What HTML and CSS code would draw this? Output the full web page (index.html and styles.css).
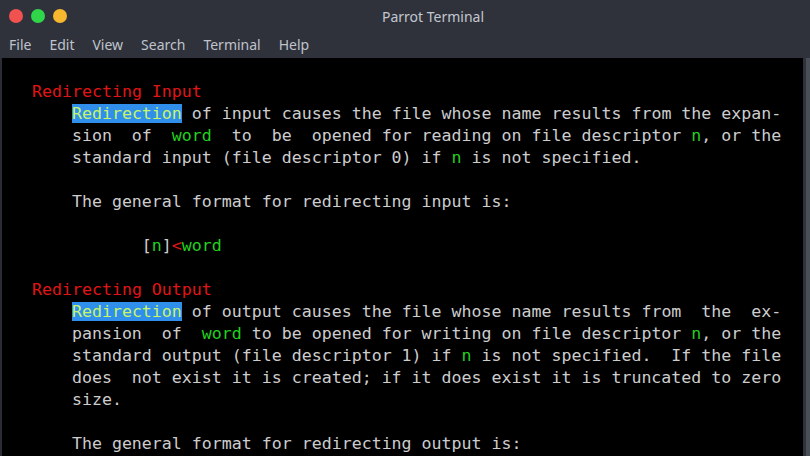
FILE: index.html
```html
<!DOCTYPE html>
<html lang="en">
<head>
  <meta charset="UTF-8" />
  <meta name="viewport" content="width=device-width, initial-scale=1.0" />
  <title>Parrot Terminal</title>
  <link rel="stylesheet" href="styles.css">
</head>
<body>
  <div class="window">

    <div class="titlebar">
      <div class="lights">
        <span class="light red"></span>
        <span class="light green"></span>
        <span class="light yellow"></span>
      </div>
      <div class="title">Parrot Terminal</div>
    </div>

    <div class="menubar">
      <span class="menu-item">File</span>
      <span class="menu-item">Edit</span>
      <span class="menu-item">View</span>
      <span class="menu-item">Search</span>
      <span class="menu-item">Terminal</span>
      <span class="menu-item">Help</span>
    </div>

    <div class="terminal">
      <div class="screen">
        <div class="line"> </div>
        <div class="line">   <span class="red">Redirecting Input</span></div>
        <div class="line">       <span class="hl">Redirection</span><span> of input causes the file whose name results from the expan-</span></div>
        <div class="line"><span>       sion  of  </span><span class="green">word</span><span>  to  be  opened for reading on file descriptor </span><span class="green">n</span><span>, or the</span></div>
        <div class="line"><span>       standard input (file descriptor 0) if </span><span class="green">n</span><span> is not specified.</span></div>
        <div class="line"> </div>
        <div class="line">       The general format for redirecting input is:</div>
        <div class="line"> </div>
        <div class="line"><span>              [</span><span class="green">n</span><span>]</span><span class="red">&lt;</span><span class="green">word</span></div>
        <div class="line"> </div>
        <div class="line">   <span class="red">Redirecting Output</span></div>
        <div class="line">       <span class="hl">Redirection</span><span> of output causes the file whose name results from  the  ex-</span></div>
        <div class="line"><span>       pansion  of  </span><span class="green">word</span><span> to be opened for writing on file descriptor </span><span class="green">n</span><span>, or the</span></div>
        <div class="line"><span>       standard output (file descriptor 1) if </span><span class="green">n</span><span> is not specified.  If the file</span></div>
        <div class="line">       does  not exist it is created; if it does exist it is truncated to zero</div>
        <div class="line">       size.</div>
        <div class="line"> </div>
        <div class="line">       The general format for redirecting output is:</div>
      </div>
      <div class="scrollbar"><div class="thumb"></div></div>
    </div>

  </div>
</body>
</html>
```

FILE: styles.css
```css
* {
  margin: 0;
  padding: 0;
  box-sizing: border-box;
}

body {
  margin: 0;
  background-color: #000;
  overflow: hidden;
}

.window {
  display: flex;
  flex-direction: column;
  width: 810px;
  height: 456px;
  background-color: #2f323b;
}

/* barre de titre */
.titlebar {
  position: relative;
  height: 33px;
  display: flex;
  align-items: center;
}

.lights {
  display: flex;
  gap: 8px;
  padding-left: 9px;
  margin-top: -2px;
}

.light {
  width: 14px;
  height: 14px;
  border-radius: 50%;
}

.light.red { background-color: #f2524f; }
.light.green { background-color: #30d64a; }
.light.yellow { background-color: #f7b72f; }

.title {
  position: absolute;
  left: 0;
  right: 0;
  top: 7px;
  text-align: center;
  padding-left: 56px;
  font-family: "Noto Sans", sans-serif;
  font-size: 14px;
  color: #c3c7cf;
}

/* menu */
.menubar {
  height: 25px;
  display: flex;
  align-items: center;
  padding-left: 9px;
  padding-bottom: 2px;
  gap: 18px;
  font-family: "Noto Sans", sans-serif;
  font-size: 14px;
  color: #bfc3cb;
}

/* zone du terminal */
.terminal {
  flex: 1;
  display: flex;
  background-color: #000;
  border-left: 2px solid #2a2d35;
  overflow: hidden;
}

.screen {
  flex: 1;
  padding-top: 1px;
  font-family: "DejaVu Sans Mono", monospace;
  font-size: 16.6px;
  color: #cdcdcd;
  overflow: hidden;
}

.line {
  height: 22px;
  line-height: 22px;
  white-space: pre;
}

.red { color: #e01515; }
.green { color: #22d11e; }

.hl {
  background-color: #2f8fea;
  color: #c8f56a;
}

.scrollbar {
  width: 7px;
  background-color: #2f323b;
  display: flex;
  justify-content: flex-end;
}

.thumb {
  width: 4px;
  height: 100%;
  background-color: #4a4e57;
}
```
